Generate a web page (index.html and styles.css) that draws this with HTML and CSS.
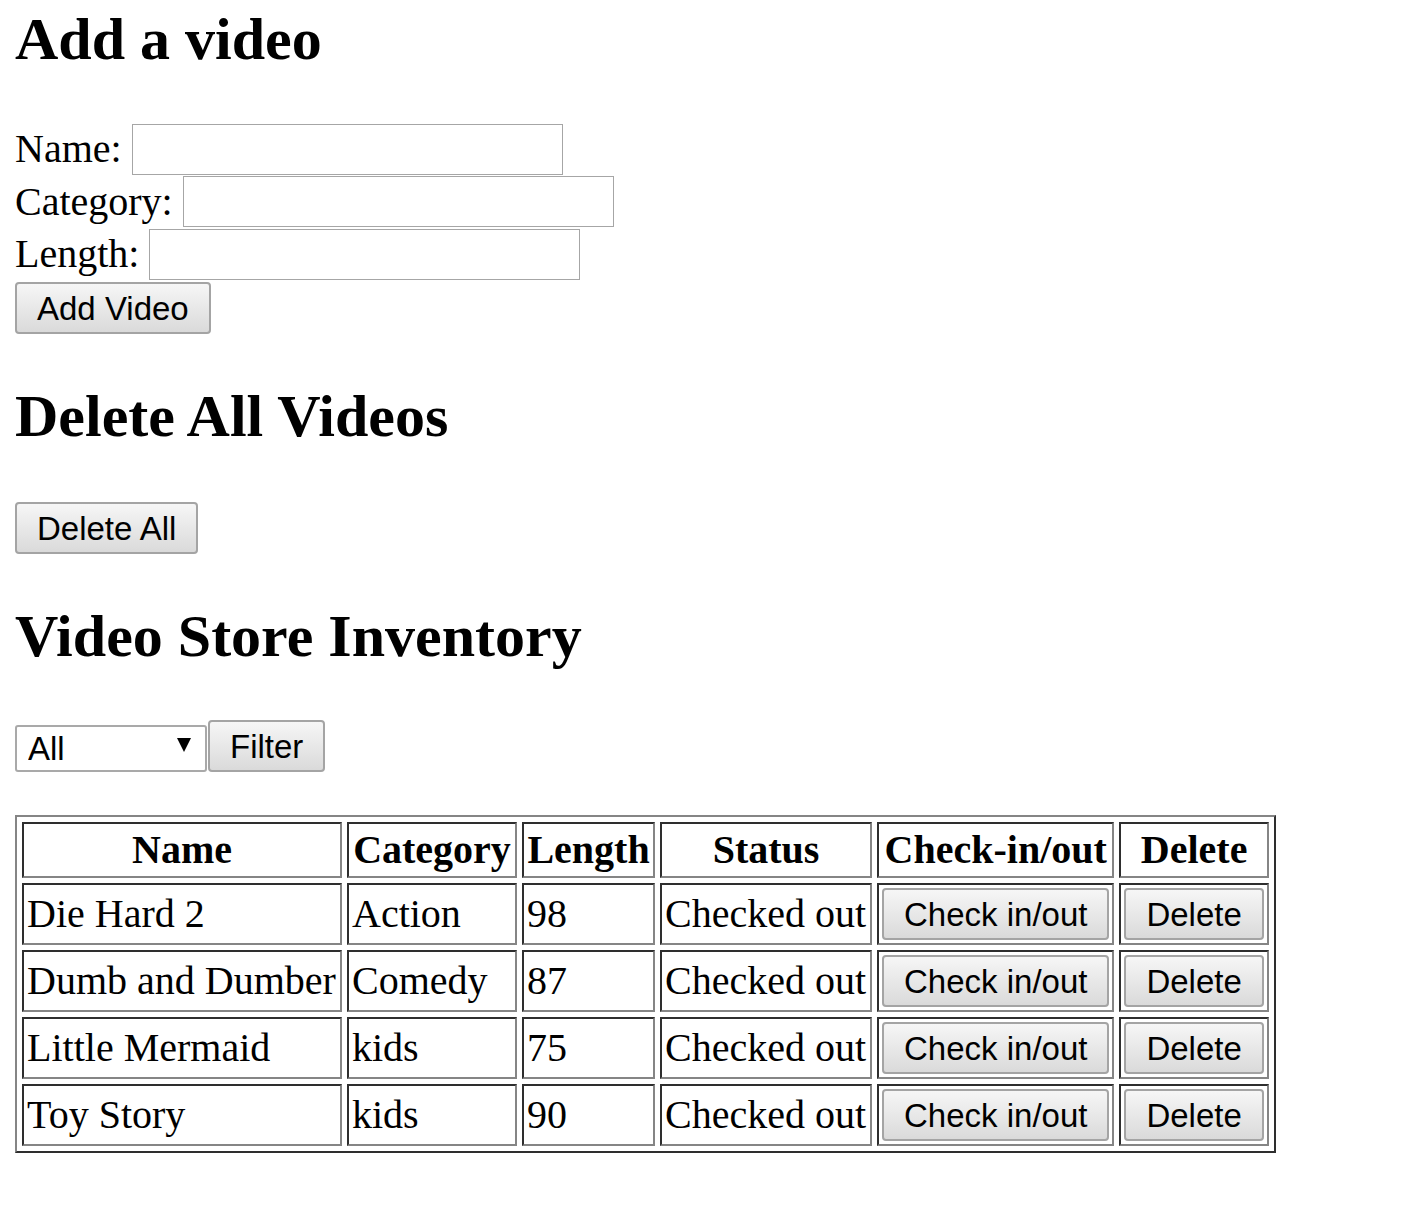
FILE: index.html
```html
<!DOCTYPE html>
<html lang="en">
<head>
<meta charset="utf-8">
<title>Video Store</title>
<link rel="stylesheet" href="styles.css">
</head>
<body>
<h2 class="title first">Add a video</h2>
<form class="add-form">
  <div class="field"><label>Name:</label><input type="text" class="text-input"></div>
  <div class="field"><label>Category:</label><input type="text" class="text-input"></div>
  <div class="field"><label>Length:</label><input type="text" class="text-input"></div>
  <button type="button" class="btn">Add Video</button>
</form>

<h2 class="title">Delete All Videos</h2>
<button type="button" class="btn">Delete All</button>

<h2 class="title">Video Store Inventory</h2>
<div class="filter-row">
  <span class="select-wrap">
    <select class="select"><option>All</option></select>
    <svg class="arrow" width="14" height="14" viewBox="0 0 14 14"><polygon points="0,0 14,0 7,14" fill="#000"/></svg>
  </span>
  <button type="button" class="btn">Filter</button>
</div>

<table class="inventory">
  <thead>
    <tr>
      <th class="c-name">Name</th>
      <th class="c-cat">Category</th>
      <th class="c-len">Length</th>
      <th class="c-status">Status</th>
      <th class="c-check">Check-in/out</th>
      <th class="c-del">Delete</th>
    </tr>
  </thead>
  <tbody>
    <tr>
      <td>Die Hard 2</td><td>Action</td><td>98</td><td>Checked out</td>
      <td><button type="button" class="btn">Check in/out</button></td>
      <td><button type="button" class="btn">Delete</button></td>
    </tr>
    <tr>
      <td>Dumb and Dumber</td><td>Comedy</td><td>87</td><td>Checked out</td>
      <td><button type="button" class="btn">Check in/out</button></td>
      <td><button type="button" class="btn">Delete</button></td>
    </tr>
    <tr>
      <td>Little Mermaid</td><td>kids</td><td>75</td><td>Checked out</td>
      <td><button type="button" class="btn">Check in/out</button></td>
      <td><button type="button" class="btn">Delete</button></td>
    </tr>
    <tr>
      <td>Toy Story</td><td>kids</td><td>90</td><td>Checked out</td>
      <td><button type="button" class="btn">Check in/out</button></td>
      <td><button type="button" class="btn">Delete</button></td>
    </tr>
  </tbody>
</table>
</body>
</html>
```

FILE: styles.css
```css
html, body {
  background: #fff;
}
body {
  margin: 0;
  padding: 0 0 40px 15px;
  font-family: "Liberation Serif", "Times New Roman", serif;
  font-size: 40px;
  color: #000;
}
.title {
  font-size: 60px;
  font-weight: bold;
  line-height: 69px;
  margin: 48px 0 49px;
}
.title.first {
  margin-top: 5px;
  margin-bottom: 49px;
}
.add-form {
  margin: 0;
}
.field {
  display: flex;
  align-items: center;
  gap: 10px;
  height: 52.5px;
}
.field label {
  line-height: 46px;
}
.text-input {
  box-sizing: border-box;
  width: 431px;
  height: 51px;
  border: 1px solid #a6a6a6;
  background: #fff;
  margin: 0;
  padding: 0 4px;
  font-family: "Liberation Sans", Arial, sans-serif;
  font-size: 33px;
}
.btn {
  box-sizing: border-box;
  height: 52px;
  padding: 0 20px;
  margin: 0;
  border: 2px solid #a4a4a4;
  border-radius: 4px;
  background: linear-gradient(#f6f6f6, #dadada);
  font-family: "Liberation Sans", Arial, sans-serif;
  font-size: 33px;
  color: #000;
  line-height: 1;
  display: inline-block;
  vertical-align: middle;
}
.filter-row {
  display: flex;
  align-items: center;
  gap: 1px;
  height: 52px;
  margin-bottom: 43px;
}
.select-wrap {
  position: relative;
  display: inline-block;
  width: 192px;
  height: 47px;
}
.select {
  box-sizing: border-box;
  width: 192px;
  height: 47px;
  margin: 0;
  padding: 0 0 0 11px;
  border: 2px solid #a9a9a9;
  border-radius: 3px;
  background: #fff;
  appearance: none;
  -webkit-appearance: none;
  font-family: "Liberation Sans", Arial, sans-serif;
  font-size: 33px;
  color: #000;
}
.arrow {
  position: absolute;
  right: 16px;
  top: 15px;
  pointer-events: none;
}
.inventory {
  table-layout: fixed;
  border-collapse: separate;
  border-spacing: 5px 5.5px;
  border-style: solid;
  border-width: 2px;
  border-color: #858585 #2e2e2e #2e2e2e #858585;
}
.inventory th,
.inventory td {
  box-sizing: border-box;
  border-style: solid;
  border-width: 2px;
  border-color: #2e2e2e #858585 #858585 #2e2e2e;
  padding: 3px;
  line-height: 46px;
  white-space: nowrap;
  overflow: hidden;
  vertical-align: middle;
}
.inventory th {
  font-weight: bold;
  text-align: center;
}
.inventory td {
  text-align: left;
}
.inventory td .btn {
  display: block;
  margin: 0 auto;
}
.c-name { width: 320px; }
.c-cat { width: 170px; }
.c-len { width: 133px; }
.c-status { width: 212px; }
.c-check { width: 237px; }
.c-del { width: 147px; }
```
